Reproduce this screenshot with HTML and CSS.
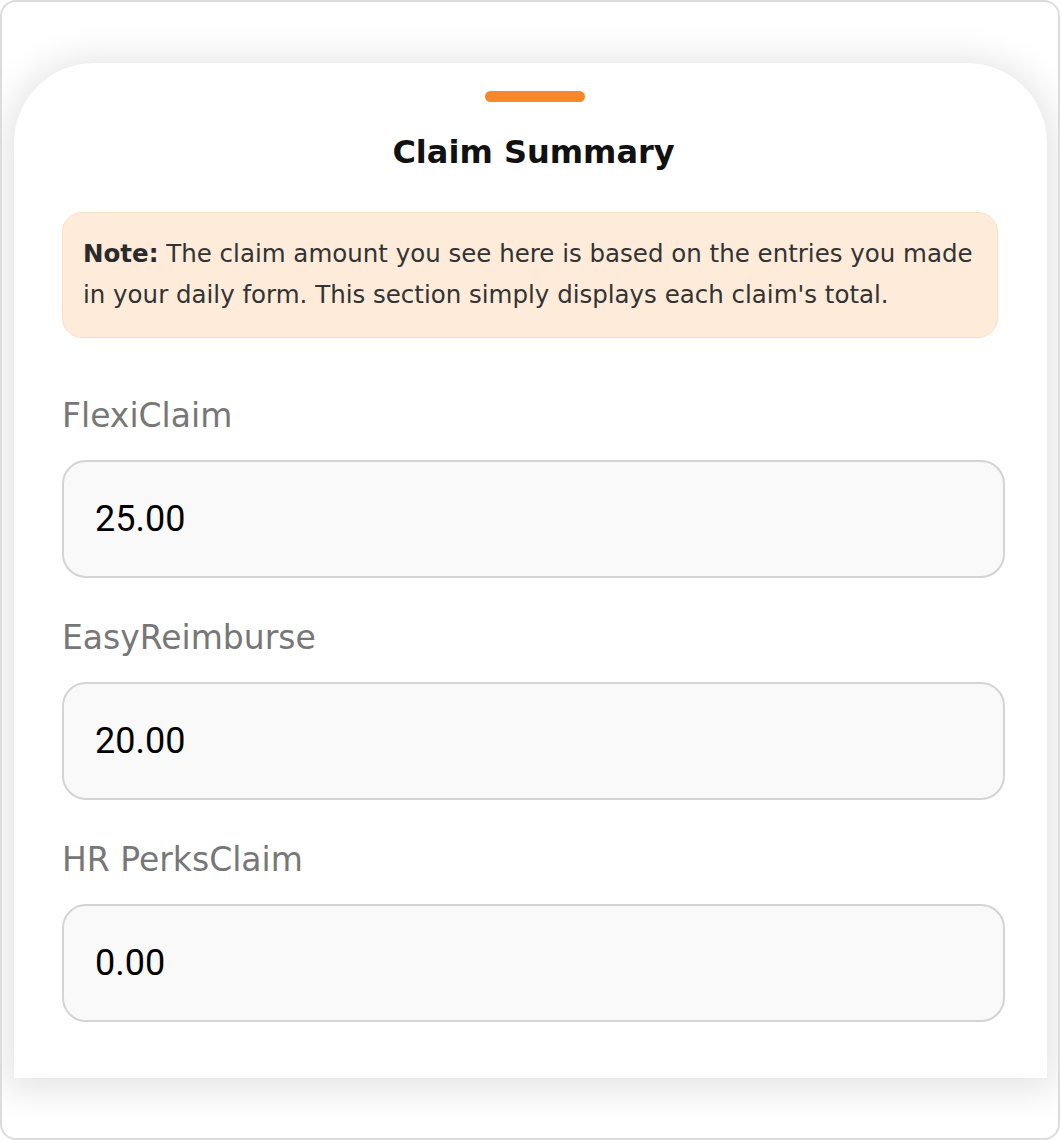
FILE: index.html
```html
<!DOCTYPE html>
<html lang="en">
<head>
<meta charset="utf-8">
<title>Claim Summary</title>
<link rel="stylesheet" href="styles.css">
</head>
<body>
<div class="frame">
  <section class="sheet">
    <div class="handle"></div>
    <h1 class="title">Claim Summary</h1>
    <div class="note"><strong>Note:</strong> The claim amount you see here is based on the entries you made in your daily form. This section simply displays each claim's total.</div>
    <div class="field">
      <label class="label">FlexiClaim</label>
      <div class="input">25.00</div>
    </div>
    <div class="field">
      <label class="label">EasyReimburse</label>
      <div class="input">20.00</div>
    </div>
    <div class="field">
      <label class="label">HR PerksClaim</label>
      <div class="input">0.00</div>
    </div>
  </section>
</div>
</body>
</html>
```
FILE: styles.css
```css
* { box-sizing: border-box; }
html, body { margin: 0; padding: 0; background: #fff; }
body { font-family: "DejaVu Sans", "Open Sans", sans-serif; }
.frame {
  width: 1060px;
  height: 1140px;
  border: 2px solid #dcdcdc;
  border-radius: 16px;
  background: #fff;
  overflow: hidden;
  padding: 61px 11px 0 12px;
}
.sheet {
  background: #fff;
  border-radius: 80px 80px 0 0;
  box-shadow: 0 4px 36px 8px rgba(0,0,0,0.11);
  height: 1015px;
  padding: 28px 42px 0 48px;
  display: flex;
  flex-direction: column;
}
.handle {
  width: 100px;
  height: 11px;
  border-radius: 6px;
  background: #f5892a;
  align-self: center;
  margin-left: 2px;
}
.title {
  margin: 30px 0 0;
  text-align: center;
  font-size: 32px;
  font-weight: 700;
  color: #111;
  line-height: 40px;
}
.note {
  margin: 40px 7px 0 0;
  background: #feebd9;
  border: 1px solid #f8e0c8;
  border-radius: 20px;
  padding: 20px 18px 22px 20px;
  font-size: 24.5px;
  line-height: 41px;
  color: #333;
}
.note strong { font-weight: 700; color: #2a2a2a; }
.field { display: flex; flex-direction: column; }
.label {
  margin-top: 58px;
  font-size: 33px;
  line-height: 40px;
  color: #777;
}
.field + .field .label { margin-top: 40px; }
.input {
  margin-top: 24px;
  height: 118px;
  border: 2px solid #d4d4d4;
  border-radius: 24px;
  background: #f9f9f9;
  padding-left: 31px;
  display: flex;
  align-items: center;
  font-family: Roboto, "Liberation Sans", sans-serif;
  font-size: 36px;
  color: #000;
}
```
